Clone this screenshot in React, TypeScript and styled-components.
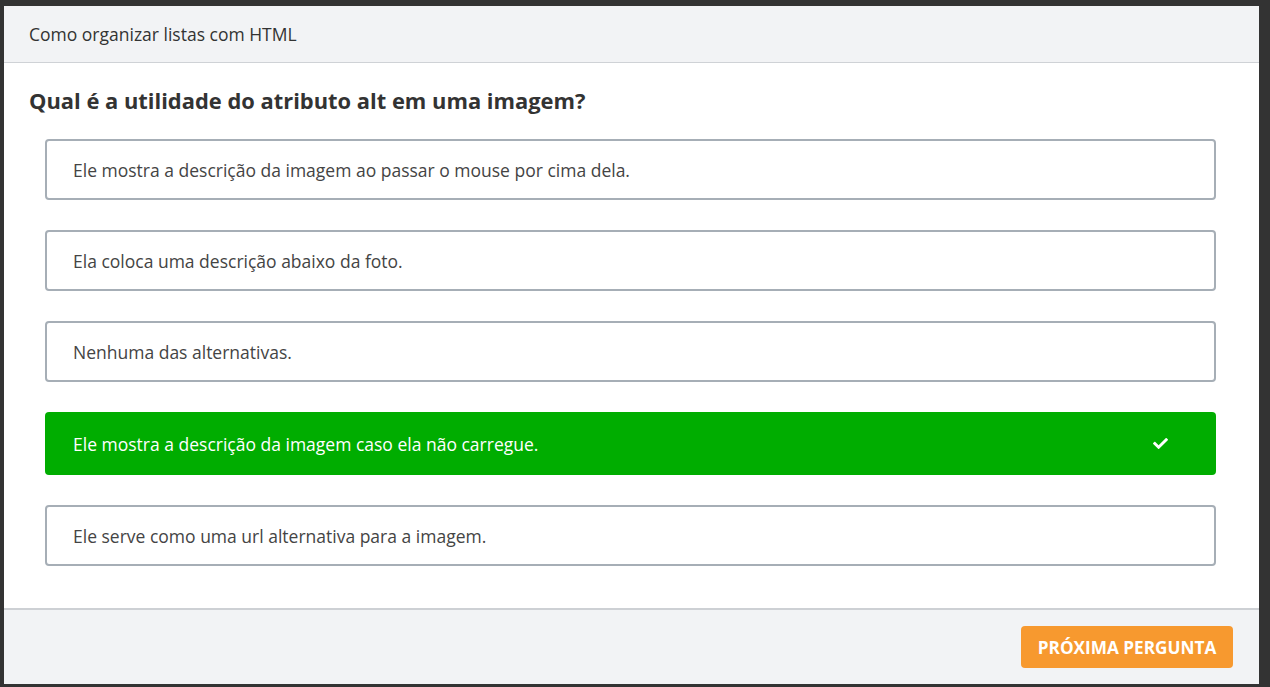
import React from "react";
import styled, { createGlobalStyle } from "styled-components";
import { FaCheck } from "react-icons/fa";

const Global = createGlobalStyle`
  html, body { margin: 0; padding: 0; }
  body {
    background: #333333;
    font-family: "Open Sans", "Noto Sans", sans-serif;
    height: 687px;
    overflow: hidden;
  }
`;

const Page = styled.div`
  padding: 6px 11px 3px 4px;
  height: 687px;
  box-sizing: border-box;
`;

const Card = styled.div`
  background: #ffffff;
  height: 100%;
  display: flex;
  flex-direction: column;
`;

const Header = styled.div`
  height: 57px;
  box-sizing: border-box;
  background: #f2f3f5;
  border-bottom: 1px solid #cfd2d6;
  display: flex;
  align-items: center;
  padding: 0 25px;
  font-size: 17.5px;
  color: #333;
`;

const Body = styled.div`
  flex: 1;
  padding: 23px 25px 0;
`;

const Question = styled.h2`
  margin: 0;
  font-size: 21.9px;
  line-height: 30px;
  font-weight: 700;
  color: #333;
`;

const Options = styled.div`
  display: flex;
  flex-direction: column;
  gap: 30px;
  margin: 23px 18px 0 16px;
`;

const Option = styled.div<{ $correct?: boolean }>`
  height: ${(p) => (p.$correct ? "63px" : "61px")};
  box-sizing: border-box;
  border: ${(p) => (p.$correct ? "none" : "2px solid #a6aeb6")};
  background: ${(p) => (p.$correct ? "#00ad00" : "#fff")};
  color: ${(p) => (p.$correct ? "#fff" : "#444")};
  font-weight: ${(p) => (p.$correct ? 500 : 400)};
  border-radius: 4px;
  display: flex;
  align-items: center;
  justify-content: space-between;
  padding: 0 48px 0 ${(p) => (p.$correct ? "28px" : "26px")};
  font-size: 17.5px;
`;

const Footer = styled.div`
  height: 76px;
  box-sizing: border-box;
  background: #f2f3f5;
  border-top: 2px solid #cdd0d4;
  display: flex;
  align-items: center;
  justify-content: flex-end;
  padding: 0 26px 0 0;
`;

const NextButton = styled.button`
  width: 212px;
  height: 42px;
  border: none;
  border-radius: 4px;
  background: #f7992f;
  color: #fff;
  font-family: "Open Sans", "Noto Sans", sans-serif;
  font-weight: 700;
  font-size: 17.2px;
  text-transform: uppercase;
  cursor: pointer;
`;

const options = [
  { text: "Ele mostra a descrição da imagem ao passar o mouse por cima dela." },
  { text: "Ela coloca uma descrição abaixo da foto." },
  { text: "Nenhuma das alternativas." },
  { text: "Ele mostra a descrição da imagem caso ela não carregue.", correct: true },
  { text: "Ele serve como uma url alternativa para a imagem." },
];

export default function App() {
  return (
    <>
      <Global />
      <Page>
        <Card>
          <Header>Como organizar listas com HTML</Header>
          <Body>
            <Question>Qual é a utilidade do atributo alt em uma imagem?</Question>
            <Options>
              {options.map((o) => (
                <Option key={o.text} $correct={o.correct}>
                  <span>{o.text}</span>
                  {o.correct && <FaCheck size={15} />}
                </Option>
              ))}
            </Options>
          </Body>
          <Footer>
            <NextButton>Próxima pergunta</NextButton>
          </Footer>
        </Card>
      </Page>
    </>
  );
}
